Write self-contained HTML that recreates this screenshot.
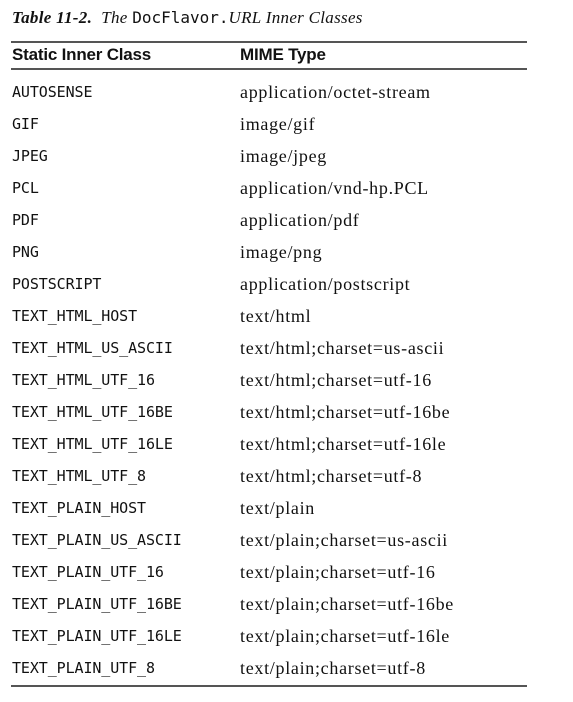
<!DOCTYPE html>
<html><head><meta charset="utf-8"><style>
body{margin:0;width:573px;height:702px;background:#fff;position:relative;color:#111;overflow:hidden}
.t{position:absolute;left:12px;top:8px;font-family:"Liberation Serif",serif;font-size:17px;font-style:italic;white-space:nowrap;letter-spacing:0.3px}
.t b{font-weight:bold}
.t code{font-family:"DejaVu Sans Mono",monospace;font-style:normal;font-size:16px;letter-spacing:0}
.rule{position:absolute;left:11px;width:516px;background:#555}
.h{position:absolute;top:45px;font-family:"Liberation Sans",sans-serif;font-weight:bold;font-size:17px;letter-spacing:-0.2px}
.r{position:absolute;left:0;width:573px;height:32px}
.a{position:absolute;left:12px;top:0;line-height:32px;font-family:"DejaVu Sans Mono",monospace;font-size:15px;letter-spacing:-0.1px}
.b{position:absolute;left:240px;top:0;line-height:32px;font-family:"Liberation Serif",serif;font-size:18px;letter-spacing:0.7px;white-space:nowrap}
</style></head><body>
<div class="t"><b>Table 11-2.</b>&nbsp; The <code>DocFlavor.</code>URL Inner Classes</div>
<div class="rule" style="top:41px;height:2px"></div>
<div class="h" style="left:12px">Static Inner Class</div>
<div class="h" style="left:240px">MIME Type</div>
<div class="rule" style="top:68px;height:2px"></div>
<div class="r" style="top:76px"><span class="a">AUTOSENSE</span><span class="b">application/octet-stream</span></div>
<div class="r" style="top:108px"><span class="a">GIF</span><span class="b">image/gif</span></div>
<div class="r" style="top:140px"><span class="a">JPEG</span><span class="b">image/jpeg</span></div>
<div class="r" style="top:172px"><span class="a">PCL</span><span class="b">application/vnd-hp.PCL</span></div>
<div class="r" style="top:204px"><span class="a">PDF</span><span class="b">application/pdf</span></div>
<div class="r" style="top:236px"><span class="a">PNG</span><span class="b">image/png</span></div>
<div class="r" style="top:268px"><span class="a">POSTSCRIPT</span><span class="b">application/postscript</span></div>
<div class="r" style="top:300px"><span class="a">TEXT_HTML_HOST</span><span class="b">text/html</span></div>
<div class="r" style="top:332px"><span class="a">TEXT_HTML_US_ASCII</span><span class="b">text/html;charset=us-ascii</span></div>
<div class="r" style="top:364px"><span class="a">TEXT_HTML_UTF_16</span><span class="b">text/html;charset=utf-16</span></div>
<div class="r" style="top:396px"><span class="a">TEXT_HTML_UTF_16BE</span><span class="b">text/html;charset=utf-16be</span></div>
<div class="r" style="top:428px"><span class="a">TEXT_HTML_UTF_16LE</span><span class="b">text/html;charset=utf-16le</span></div>
<div class="r" style="top:460px"><span class="a">TEXT_HTML_UTF_8</span><span class="b">text/html;charset=utf-8</span></div>
<div class="r" style="top:492px"><span class="a">TEXT_PLAIN_HOST</span><span class="b">text/plain</span></div>
<div class="r" style="top:524px"><span class="a">TEXT_PLAIN_US_ASCII</span><span class="b">text/plain;charset=us-ascii</span></div>
<div class="r" style="top:556px"><span class="a">TEXT_PLAIN_UTF_16</span><span class="b">text/plain;charset=utf-16</span></div>
<div class="r" style="top:588px"><span class="a">TEXT_PLAIN_UTF_16BE</span><span class="b">text/plain;charset=utf-16be</span></div>
<div class="r" style="top:620px"><span class="a">TEXT_PLAIN_UTF_16LE</span><span class="b">text/plain;charset=utf-16le</span></div>
<div class="r" style="top:652px"><span class="a">TEXT_PLAIN_UTF_8</span><span class="b">text/plain;charset=utf-8</span></div>
<div class="rule" style="top:685px;height:2px"></div>
</body></html>
